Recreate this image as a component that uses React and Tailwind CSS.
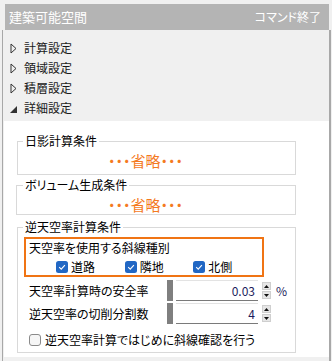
import React from 'react';

const font = "font-['Noto_Sans_CJK_JP',sans-serif] [font-feature-settings:'palt']";

const Closed = () => (
  <svg width="7" height="11" viewBox="0 0 7 11">
    <polygon points="1,1 6,5.5 1,10" fill="none" stroke="#333" strokeWidth="1" />
  </svg>
);

const Open = () => (
  <svg width="7" height="11" viewBox="0 0 7 11">
    <polygon points="7,3 7,10 0,10" fill="#333" />
  </svg>
);

const TreeRow = ({ label, open }) => (
  <div className="h-[20px] flex items-center pl-[7px] gap-[7px] text-[12px] text-[#1a1a1a]">
    {open ? <Open /> : <Closed />}
    <span>{label}</span>
  </div>
);

const Checked = ({ label }) => (
  <div className="w-[75px] flex items-center gap-[3px]">
    <svg width="12" height="12" viewBox="0 0 12 12">
      <rect x="0" y="0" width="12" height="12" rx="2.5" fill="#2167c4" />
      <path d="M3.2 6.2 L5.2 8.1 L8.9 4.2" fill="none" stroke="#fff" strokeWidth="1.1" />
    </svg>
    <span className="text-[12px] leading-[16px]">{label}</span>
  </div>
);

const Spinner = () => (
  <div className="flex flex-col gap-[1px] pt-[2px]">
    <div className="w-[9px] h-[8px] bg-[#e6e6e6] border border-[#cfcfcf] flex items-center justify-center">
      <svg width="5" height="3" viewBox="0 0 5 3"><polygon points="2.5,0 5,3 0,3" fill="#111" /></svg>
    </div>
    <div className="w-[9px] h-[8px] bg-[#e6e6e6] border border-[#cfcfcf] flex items-center justify-center">
      <svg width="5" height="3" viewBox="0 0 5 3"><polygon points="0,0 5,0 2.5,3" fill="#111" /></svg>
    </div>
  </div>
);

const NumRow = ({ label, value, unit, className }) => (
  <div className={"h-[21px] flex items-stretch pl-[11px] " + className}>
    <div className="w-[138px] flex items-center text-[12px]">{label}</div>
    <div className="w-[6px] bg-[#7f7f7f]" />
    <div className="ml-[3px] w-[82px] bg-white border-t border-t-[#e3e3e3] border-b border-b-[#7a7a7a] flex items-center justify-end pr-[3px] text-[12px] text-[#1c1c5c]">
      {value}
    </div>
    <div className="ml-[4px]">
      <Spinner />
    </div>
    {unit && <div className="ml-[5px] flex items-center text-[12px] text-[#1c1c5c]">{unit}</div>}
  </div>
);

export default function App() {
  return (
    <div className={"w-[332px] h-[361px] bg-[#f0f0f0] pt-[4px] overflow-hidden " + font}>
      <div className="ml-[5px] mr-[3px] h-[26px] bg-[#b4b4b4] flex items-center justify-between pl-[4px] pr-[8px] text-white">
        <span className="text-[13px]">建築可能空間</span>
        <span className="text-[12px]">コマンド終了</span>
      </div>
      <div className="ml-[2px] w-[329px] h-[331px] border-l border-r-2 border-[#a8a8a8]">
        <div className="pt-[8px]">
          <TreeRow label="計算設定" />
          <TreeRow label="領域設定" />
          <TreeRow label="積層設定" />
          <TreeRow label="詳細設定" open />
        </div>
        <div className="mt-[3px] ml-[1px] h-[236px] bg-white pt-[12px] text-black">
          <fieldset className="ml-[13px] w-[279px] border border-[#d9d9d9]">
            <legend className="ml-[5px] px-[2px] text-[12px] leading-[16px]">日影計算条件</legend>
            <div className="h-[25px] pt-[1px] pl-[90px] leading-[20px] text-[#f47a1f]">
              <span className="text-[15px]">・・・省略・・・</span>
            </div>
          </fieldset>
          <fieldset className="mt-[2px] ml-[12px] w-[280px] border border-[#d9d9d9]">
            <legend className="ml-[6px] px-[2px] text-[12px] leading-[16px]">ボリューム生成条件</legend>
            <div className="h-[21px] pt-[1px] pl-[91px] leading-[20px] text-[#f47a1f]">
              <span className="text-[15px]">・・・省略・・・</span>
            </div>
          </fieldset>
          <fieldset className="mt-[4px] ml-[13px] w-[279px] border border-[#d9d9d9] pb-[6px]">
            <legend className="ml-[5px] px-[2px] text-[12px] leading-[16px]">逆天空率計算条件</legend>
            <div className="mt-[2px] ml-[6px] w-[240px] border-2 border-[#f07414] pt-[1px] pl-[3px]">
              <div className="text-[12px] leading-[16px]">天空率を使用する斜線種別</div>
              <div className="mt-[3px] h-[16px] flex items-center pl-[27px]">
                <Checked label="道路" />
                <Checked label="隣地" />
                <Checked label="北側" />
              </div>
            </div>
            <NumRow className="mt-[3px]" label="天空率計算時の安全率" value="0.03" unit="%" />
            <NumRow className="mt-[2px]" label="逆天空率の切削分割数" value="4" />
            <div className="mt-[9px] h-[13px] flex items-center pl-[11px] gap-[4px]">
              <div className="w-[12px] h-[12px] rounded-[3px] border border-[#8a8a8a] bg-[#f6f6f6]" />
              <span className="text-[12px]">逆天空率計算ではじめに斜線確認を行う</span>
            </div>
          </fieldset>
        </div>
      </div>
    </div>
  );
}
